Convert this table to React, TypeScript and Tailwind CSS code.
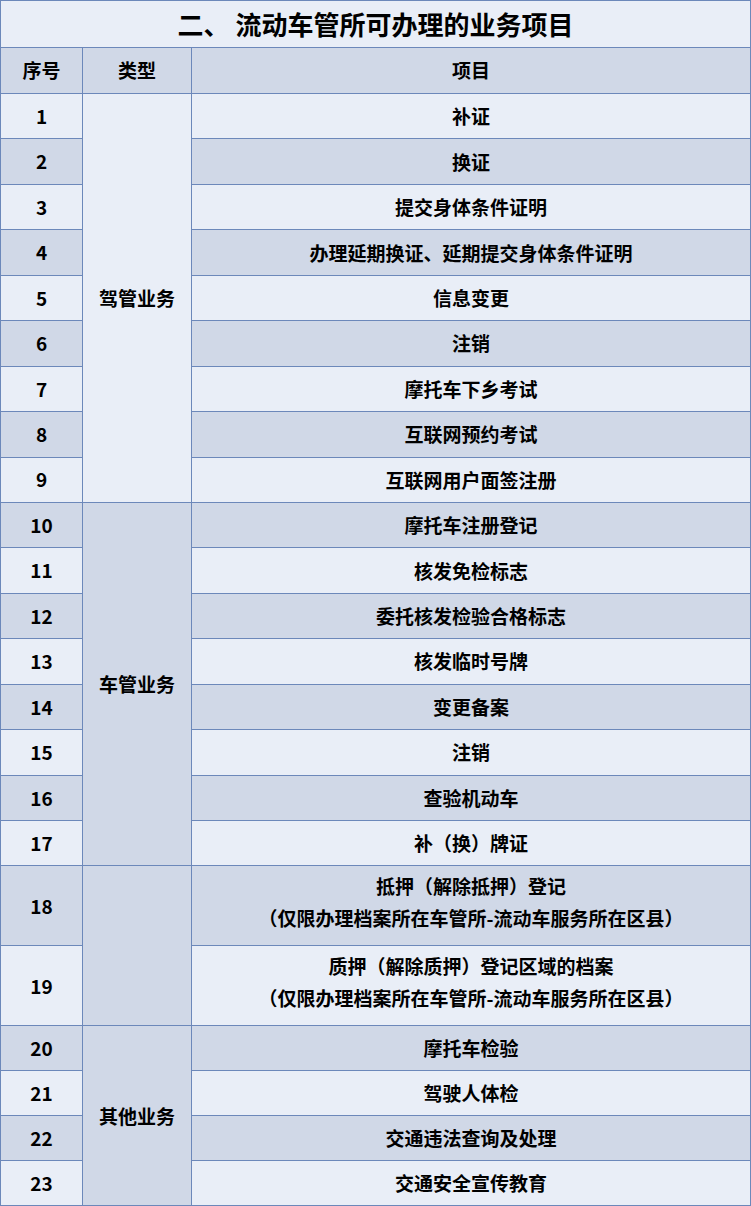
import React from "react";

type Row = { no: number; item: string[] };

const rows: Row[] = [
  { no: 1, item: ["补证"] },
  { no: 2, item: ["换证"] },
  { no: 3, item: ["提交身体条件证明"] },
  { no: 4, item: ["办理延期换证、延期提交身体条件证明"] },
  { no: 5, item: ["信息变更"] },
  { no: 6, item: ["注销"] },
  { no: 7, item: ["摩托车下乡考试"] },
  { no: 8, item: ["互联网预约考试"] },
  { no: 9, item: ["互联网用户面签注册"] },
  { no: 10, item: ["摩托车注册登记"] },
  { no: 11, item: ["核发免检标志"] },
  { no: 12, item: ["委托核发检验合格标志"] },
  { no: 13, item: ["核发临时号牌"] },
  { no: 14, item: ["变更备案"] },
  { no: 15, item: ["注销"] },
  { no: 16, item: ["查验机动车"] },
  { no: 17, item: ["补（换）牌证"] },
  { no: 18, item: ["抵押（解除抵押）登记", "（仅限办理档案所在车管所-流动车服务所在区县）"] },
  { no: 19, item: ["质押（解除质押）登记区域的档案", "（仅限办理档案所在车管所-流动车服务所在区县）"] },
  { no: 20, item: ["摩托车检验"] },
  { no: 21, item: ["驾驶人体检"] },
  { no: 22, item: ["交通违法查询及处理"] },
  { no: 23, item: ["交通安全宣传教育"] },
];

// merged cells in the 类型 column: start row -> span, label, shade
const groups: Record<number, { span: number; label: string; dark: boolean }> = {
  1: { span: 9, label: "驾管业务", dark: false },
  10: { span: 8, label: "车管业务", dark: true },
  18: { span: 2, label: "", dark: true },
  20: { span: 4, label: "其他业务", dark: true },
};

const light = "bg-[#e9eef7]";
const dark = "bg-[#d0d8e7]";
const cell = "border border-[#6c88ba] text-center align-middle p-0";

function rowHeight(no: number) {
  if (no === 18 || no === 19) return "h-[80px]";
  if (no >= 20) return "h-[45px]";
  return "h-[45.45px]";
}

export default function App() {
  return (
    <div
      className="w-[751px] h-[1206px] overflow-hidden bg-[#e9eef7] text-black"
      style={{ fontFamily: '"Noto Sans CJK SC", "Noto Sans", sans-serif' }}
    >
      <table className="w-[751px] table-fixed border-collapse">
        <colgroup>
          <col className="w-[82px]" />
          <col className="w-[109px]" />
          <col />
        </colgroup>
        <tbody>
          <tr className="h-[47px]">
            <td colSpan={3} className={`${cell} ${light} text-[26px] font-bold leading-none`}>
              二、 流动车管所可办理的业务项目
            </td>
          </tr>
          <tr className="h-[46px]">
            <td className={`${cell} ${dark} text-[19px] font-bold`}>序号</td>
            <td className={`${cell} ${dark} text-[19px] font-bold`}>类型</td>
            <td className={`${cell} ${dark} text-[19px] font-bold`}>项目</td>
          </tr>
          {rows.map((r) => {
            const shade = r.no % 2 === 0 ? dark : light;
            const g = groups[r.no];
            const twoLine = r.item.length > 1;
            return (
              <tr key={r.no} className={rowHeight(r.no)}>
                <td className={`${cell} ${shade} text-[19px] font-bold`}>{r.no}</td>
                {g && (
                  <td
                    rowSpan={g.span}
                    className={`${cell} ${g.dark ? dark : light} text-[19px] font-bold`}
                  >
                    {g.label}
                  </td>
                )}
                <td
                  className={`${cell} ${shade} text-[19px] font-bold leading-[32px] ${
                    twoLine ? "pb-[8px]" : ""
                  }`}
                >
                  {r.item.map((line) => (
                    <div key={line}>{line}</div>
                  ))}
                </td>
              </tr>
            );
          })}
        </tbody>
      </table>
    </div>
  );
}
